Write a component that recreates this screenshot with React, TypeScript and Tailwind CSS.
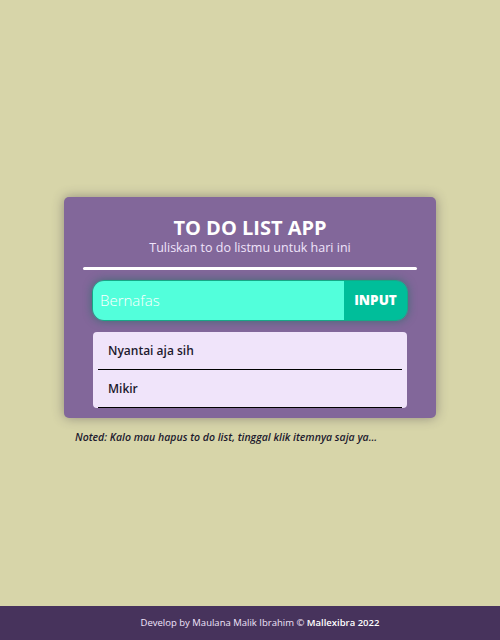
import React, { useState } from 'react';

const App = () => {
  const [text, setText] = useState('Bernafas');
  const [todos, setTodos] = useState<string[]>(['Nyantai aja sih', 'Mikir']);

  const addTodo = () => {
    if (!text.trim()) return;
    setTodos([...todos, text]);
    setText('');
  };

  return (
    <div
      className="min-h-screen flex flex-col bg-[#d7d5a9]"
      style={{ fontFamily: '"Open Sans", "Liberation Sans", sans-serif' }}
    >
      {/* Main */}
      <div className="flex-1 flex flex-col items-center pt-[197px]">
        <div className="w-[372px]">
          {/* Card */}
          <div className="bg-[#82679a] rounded-[5px] shadow-[0_0_12px_rgba(60,50,70,0.45)] px-[19px] pt-[19px] pb-[10px]">
            <h1 className="text-center text-white font-bold text-[20px] leading-[24px]">
              TO DO LIST APP
            </h1>
            <p className="text-center text-[#f0e4fa] text-[12.5px] leading-[16px]">
              Tuliskan to do listmu untuk hari ini
            </p>
            <div className="h-[3px] bg-white rounded-full mt-[11px]" />

            {/* Input group */}
            <div className="mx-[9px] mt-[10px] flex h-[41px] rounded-[12px] overflow-hidden border border-[#16a886] shadow-[0_0_8px_rgba(20,110,90,0.6)]">
              <input
                value={text}
                onChange={(e) => setText(e.target.value)}
                className="flex-1 min-w-0 bg-[#52ffdb] text-white text-[15px] font-light px-[7px] outline-none placeholder-white"
              />
              <button
                onClick={addTodo}
                className="w-[63px] bg-[#00be9a] text-white font-extrabold text-[13.5px]"
              >
                INPUT
              </button>
            </div>

            {/* List */}
            <div className="mx-[10px] mt-[11px] bg-[#f0e4fa] rounded-[4px] px-[5px]">
              {todos.map((t, i) => (
                <div
                  key={i}
                  onClick={() => setTodos(todos.filter((_, j) => j !== i))}
                  className="h-[38px] flex items-center px-[10px] border-b border-black text-[#1d1a2e] text-[12px] font-semibold cursor-pointer"
                >
                  {t}
                </div>
              ))}
            </div>
          </div>

          {/* Note */}
          <p className="mt-[12px] ml-[11px] text-[10.5px] italic font-semibold text-[#1d1a2e]">
            Noted: Kalo mau hapus to do list, tinggal klik itemnya saja ya...
          </p>
        </div>
      </div>

      {/* Footer */}
      <div className="h-[34px] bg-[#47335c] flex items-center justify-center pl-[20px] text-[9.5px] text-[#f0e4fa]">
        Develop by Maulana Malik Ibrahim ©&nbsp;<span className="text-white font-semibold">Mallexibra 2022</span>
      </div>
    </div>
  );
};

export default App;
